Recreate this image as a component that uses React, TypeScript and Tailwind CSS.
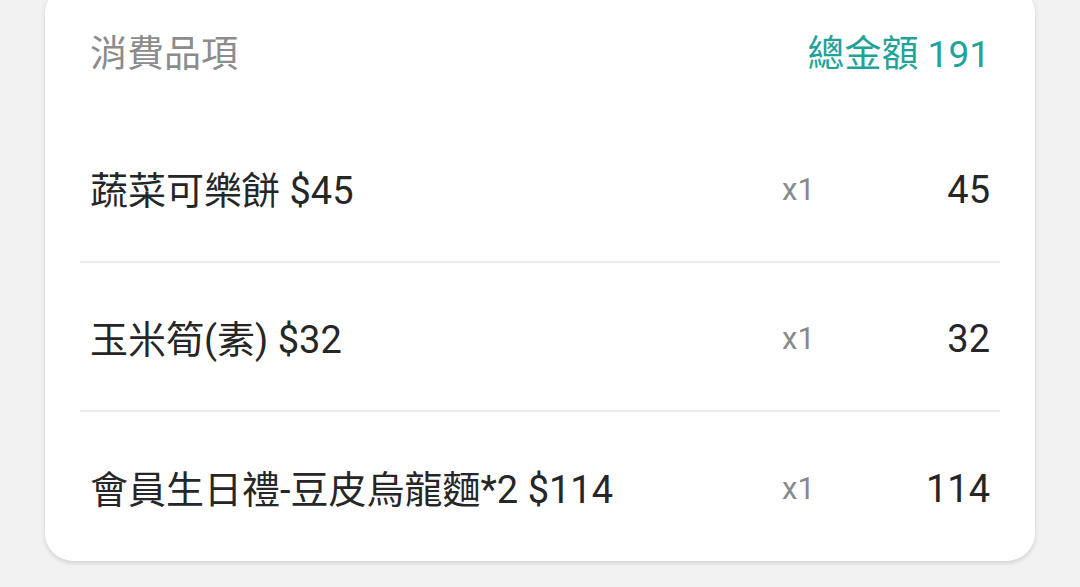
import React from "react";

interface Item {
  name: string;
  qty: number;
  price: number;
}

const items: Item[] = [
  { name: "蔬菜可樂餅 $45", qty: 1, price: 45 },
  { name: "玉米筍(素) $32", qty: 1, price: 32 },
  { name: "會員生日禮-豆皮烏龍麵*2 $114", qty: 1, price: 114 },
];

const App: React.FC = () => {
  const total = items.reduce((sum, item) => sum + item.price * item.qty, 0);

  return (
    <div
      className="w-[1080px] h-[587px] overflow-hidden bg-[#f2f2f2]"
      style={{ fontFamily: "Roboto, 'Noto Sans CJK TC', sans-serif" }}
    >
      <div className="mx-[45px] -mt-[15px] bg-white rounded-[28px] shadow-[0_2px_5px_rgba(0,0,0,0.14)] px-[35px]">
        <div className="h-[129px] pt-[48px] px-[10px] flex justify-between items-start text-[37px] leading-[44px]">
          <span className="text-[#8c8c8c]">消費品項</span>
          <span className="text-[#1fa398]">總金額 {total}</span>
        </div>

        {items.map((item, index) => (
          <div
            key={index}
            className={`h-[149px] px-[10px] pt-[7px] flex items-center text-[38px] leading-[44px] ${
              index < items.length - 1 ? "border-b-2 border-[#ececec]" : ""
            }`}
          >
            <span className="flex-1 text-[#262626]">{item.name}</span>
            <span className="w-[60px] text-[31px] text-[#8a8a8a] -mt-[3px]">x{item.qty}</span>
            <span className="w-[148px] text-right text-[#262626] -mt-[3px]">{item.price}</span>
          </div>
        ))}
      </div>
    </div>
  );
};

export default App;
